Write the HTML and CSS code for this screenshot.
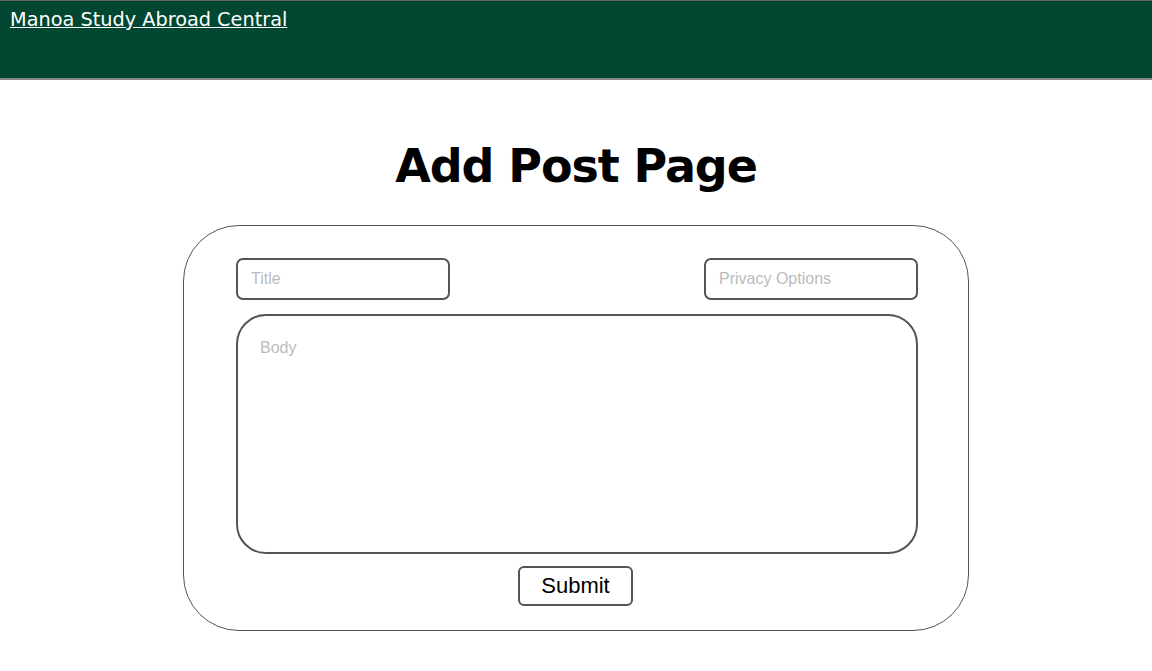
FILE: index.html
```html
<!DOCTYPE html>
<html>
<head>
<meta charset="utf-8">
<link rel="stylesheet" href="styles.css">
</head>
<body>
<header class="topbar">
  <a class="brand" href="#">Manoa Study Abroad Central</a>
</header>
<main class="page">
  <h1 class="page-title">Add Post Page</h1>
  <form class="post-card">
    <div class="row">
      <input class="field" type="text" placeholder="Title">
      <input class="field" type="text" placeholder="Privacy Options">
    </div>
    <textarea class="body-field" placeholder="Body"></textarea>
    <div class="actions">
      <button class="submit" type="button">Submit</button>
    </div>
  </form>
</main>
</body>
</html>
```

FILE: styles.css
```css
* { box-sizing: border-box; }
html, body { margin: 0; padding: 0; background: #fff; }
body { font-family: "DejaVu Sans", Verdana, sans-serif; }

.topbar {
  height: 80px;
  background: #024731;
  border-top: 1px solid #666;
  border-bottom: 2px solid #888;
  padding: 7px 10px 6px;
}
.brand {
  color: #fff;
  font-size: 19.3px;
  text-decoration: underline;
  line-height: 24px;
}

.page {
  display: flex;
  flex-direction: column;
  align-items: center;
}
.page-title {
  font-size: 46px;
  letter-spacing: -1.1px;
  font-weight: bold;
  margin: 58px 0 31px;
  line-height: 56px;
  color: #000;
}

.post-card {
  width: 786px;
  height: 406px;
  border: 1px solid #555;
  border-radius: 56px;
  padding: 32px 50px 0 52px;
  display: flex;
  flex-direction: column;
}
.row {
  display: flex;
  justify-content: space-between;
  width: 682px;
}
.field {
  width: 214px;
  height: 42px;
  border: 2px solid #555;
  border-radius: 7px;
  padding: 0 13px;
  font-family: "Liberation Sans", Arial, sans-serif;
  font-size: 16px;
  outline: none;
}
.field::placeholder, .body-field::placeholder { color: #bbb; }

.body-field {
  margin-top: 14px;
  width: 682px;
  height: 240px;
  border: 2px solid #555;
  border-radius: 30px;
  padding: 23px 22px;
  font-family: "Liberation Sans", Arial, sans-serif;
  font-size: 16px;
  resize: none;
  outline: none;
}
.actions {
  display: flex;
  justify-content: center;
  margin-top: 12px;
  width: 682px;
  padding-right: 3px;
}
.submit {
  width: 115px;
  height: 40px;
  background: #fff;
  border: 2px solid #555;
  border-radius: 6px;
  font-family: "Liberation Sans", Arial, sans-serif;
  font-size: 22px;
  color: #000;
  padding: 0;
}
```
